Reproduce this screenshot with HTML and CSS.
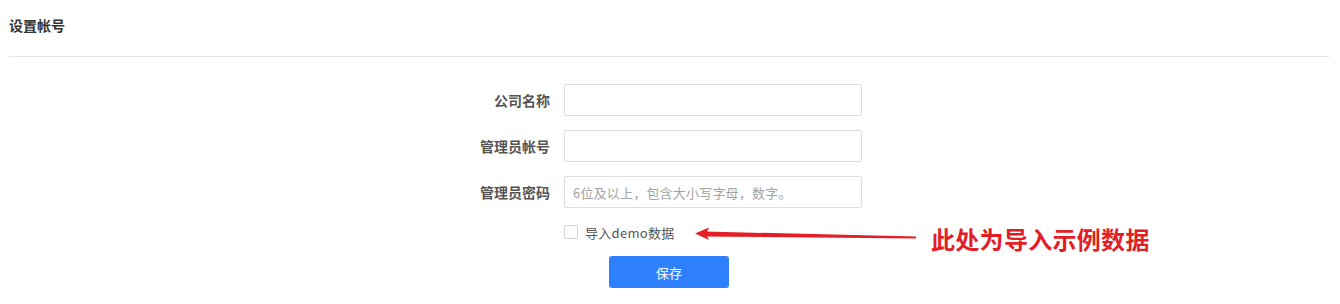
FILE: index.html
```html
<!DOCTYPE html>
<html lang="zh-CN">
<head>
  <meta charset="UTF-8" />
  <meta name="viewport" content="width=device-width, initial-scale=1.0"/>
  <title>设置帐号</title>
  <link rel="stylesheet" href="styles.css">
</head>
<body>
  <div class="page">
    <header class="page-header">
      <h1>设置帐号</h1>
    </header>

    <form class="account-form">
      <div class="form-row">
        <label class="form-label" for="company">公司名称</label>
        <input class="form-input" id="company" type="text">
      </div>
      <div class="form-row">
        <label class="form-label" for="admin">管理员帐号</label>
        <input class="form-input" id="admin" type="text">
      </div>
      <div class="form-row">
        <label class="form-label" for="password">管理员密码</label>
        <input class="form-input" id="password" type="password" placeholder="6位及以上，包含大小写字母，数字。">
      </div>
      <div class="form-row check-row">
        <label class="check">
          <span class="check-box"></span>
          <span>导入demo数据</span>
        </label>
      </div>
      <div class="form-row button-row">
        <button type="button" class="save-btn">保存</button>
      </div>
    </form>

    <!-- annotation over the screenshot -->
    <svg class="note-arrow" width="230" height="20" viewBox="690 226 230 20">
      <polygon points="705,231.5 916,236.5 916,238.5 705,236.5" fill="#e41e26"/>
      <polygon points="695,233.5 709,227.5 706,234 709,240" fill="#e41e26"/>
    </svg>
    <div class="note-text">此处为导入示例数据</div>
  </div>
</body>
</html>
```

FILE: styles.css
```css
* {
  box-sizing: border-box;
}

body {
  margin: 0;
  background: #fff;
  font-family: "Noto Sans CJK SC", "Liberation Sans", sans-serif;
  color: #333;
}

.page {
  position: relative;
  padding: 0 11px 0 9px;
  height: 304px;
}

.page-header {
  height: 57px;
  border-bottom: 1px solid #e6e6e6;
}

.page-header h1 {
  margin: 0;
  font-size: 14px;
  font-weight: bold;
  line-height: 51px;
  color: #333;
}

.account-form {
  margin: 27px 0 0 441px;
  display: flex;
  flex-direction: column;
  gap: 14px;
}

.form-row {
  display: flex;
  align-items: center;
  gap: 14px;
  height: 32px;
}

.form-label {
  width: 100px;
  text-align: right;
  font-size: 14px;
  font-weight: bold;
  color: #555;
}

.form-input {
  width: 298px;
  height: 32px;
  border: 1px solid #dcdcdc;
  border-radius: 2px;
  padding: 0 8px;
  font-family: inherit;
  font-size: 13px;
  letter-spacing: 0.2px;
  color: #333;
  outline: none;
}

.form-input::placeholder {
  color: #a3a3a3;
}

.check-row {
  height: 20px;
  padding-left: 114px;
}

.check {
  display: flex;
  align-items: center;
  gap: 7px;
  font-size: 13px;
  letter-spacing: 0.3px;
  color: #555;
}

.check-box {
  width: 14px;
  height: 14px;
  border: 1px solid #d4d4d4;
  border-radius: 2px;
}

.button-row {
  padding-left: 159px;
}

.save-btn {
  width: 120px;
  height: 32px;
  border: none;
  border-radius: 3px;
  background: #2f80fd;
  color: #fff;
  font-family: inherit;
  font-size: 13px;
  cursor: pointer;
}

.note-arrow {
  position: absolute;
  left: 690px;
  top: 226px;
}

.note-text {
  position: absolute;
  left: 931px;
  top: 226px;
  font-size: 24px;
  line-height: 26px;
  font-weight: bold;
  letter-spacing: 0.3px;
  color: #e41e26;
}
```
